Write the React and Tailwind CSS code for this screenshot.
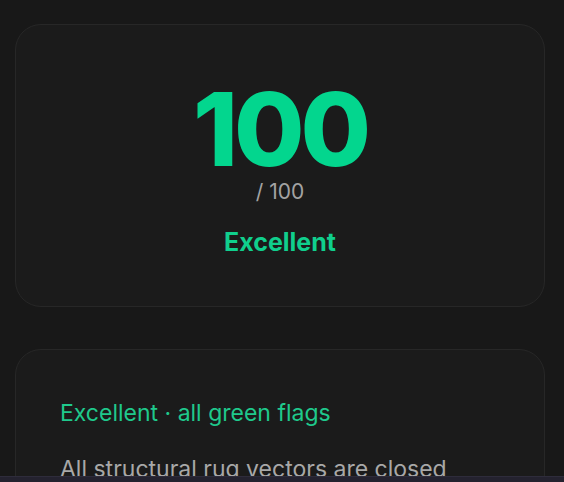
export default function App() {
  return (
    <div
      className="h-[482px] bg-[#181818] pl-[15px] pr-[19px] pt-[24px] overflow-hidden"
      style={{ fontFamily: "Inter, 'Noto Sans', sans-serif" }}
    >
      {/* score card */}
      <div className="h-[283px] rounded-[26px] border border-[#272727] bg-[#1b1b1b] flex flex-col items-center pt-[60px]">
        <div className="text-[102px] leading-[88px] font-extrabold tracking-[-4px] text-[#03d68e]">100</div>
        <div className="mt-[7px] text-[21px] leading-[24px] text-[#a3a3a3]">/ 100</div>
        <div className="mt-[23px] text-[25px] leading-[30px] font-bold text-[#10cf8d]">Excellent</div>
      </div>

      {/* verdict card */}
      <div className="mt-[42px] h-[200px] rounded-[26px] border border-[#272727] bg-[#1b1b1b] px-[44px] pt-[48px]">
        <div className="text-[23px] leading-[30px] text-[#1fc98c]">Excellent · all green flags</div>
        <div className="mt-[26px] text-[23px] leading-[30px] text-[#a8a8a8]">All structural rug vectors are closed</div>
      </div>

      {/* bottom bar */}
      <div className="fixed left-0 right-0 bottom-0 h-[6px] bg-[#24222f] border-t border-[#2e2c3b]" />
    </div>
  );
}
